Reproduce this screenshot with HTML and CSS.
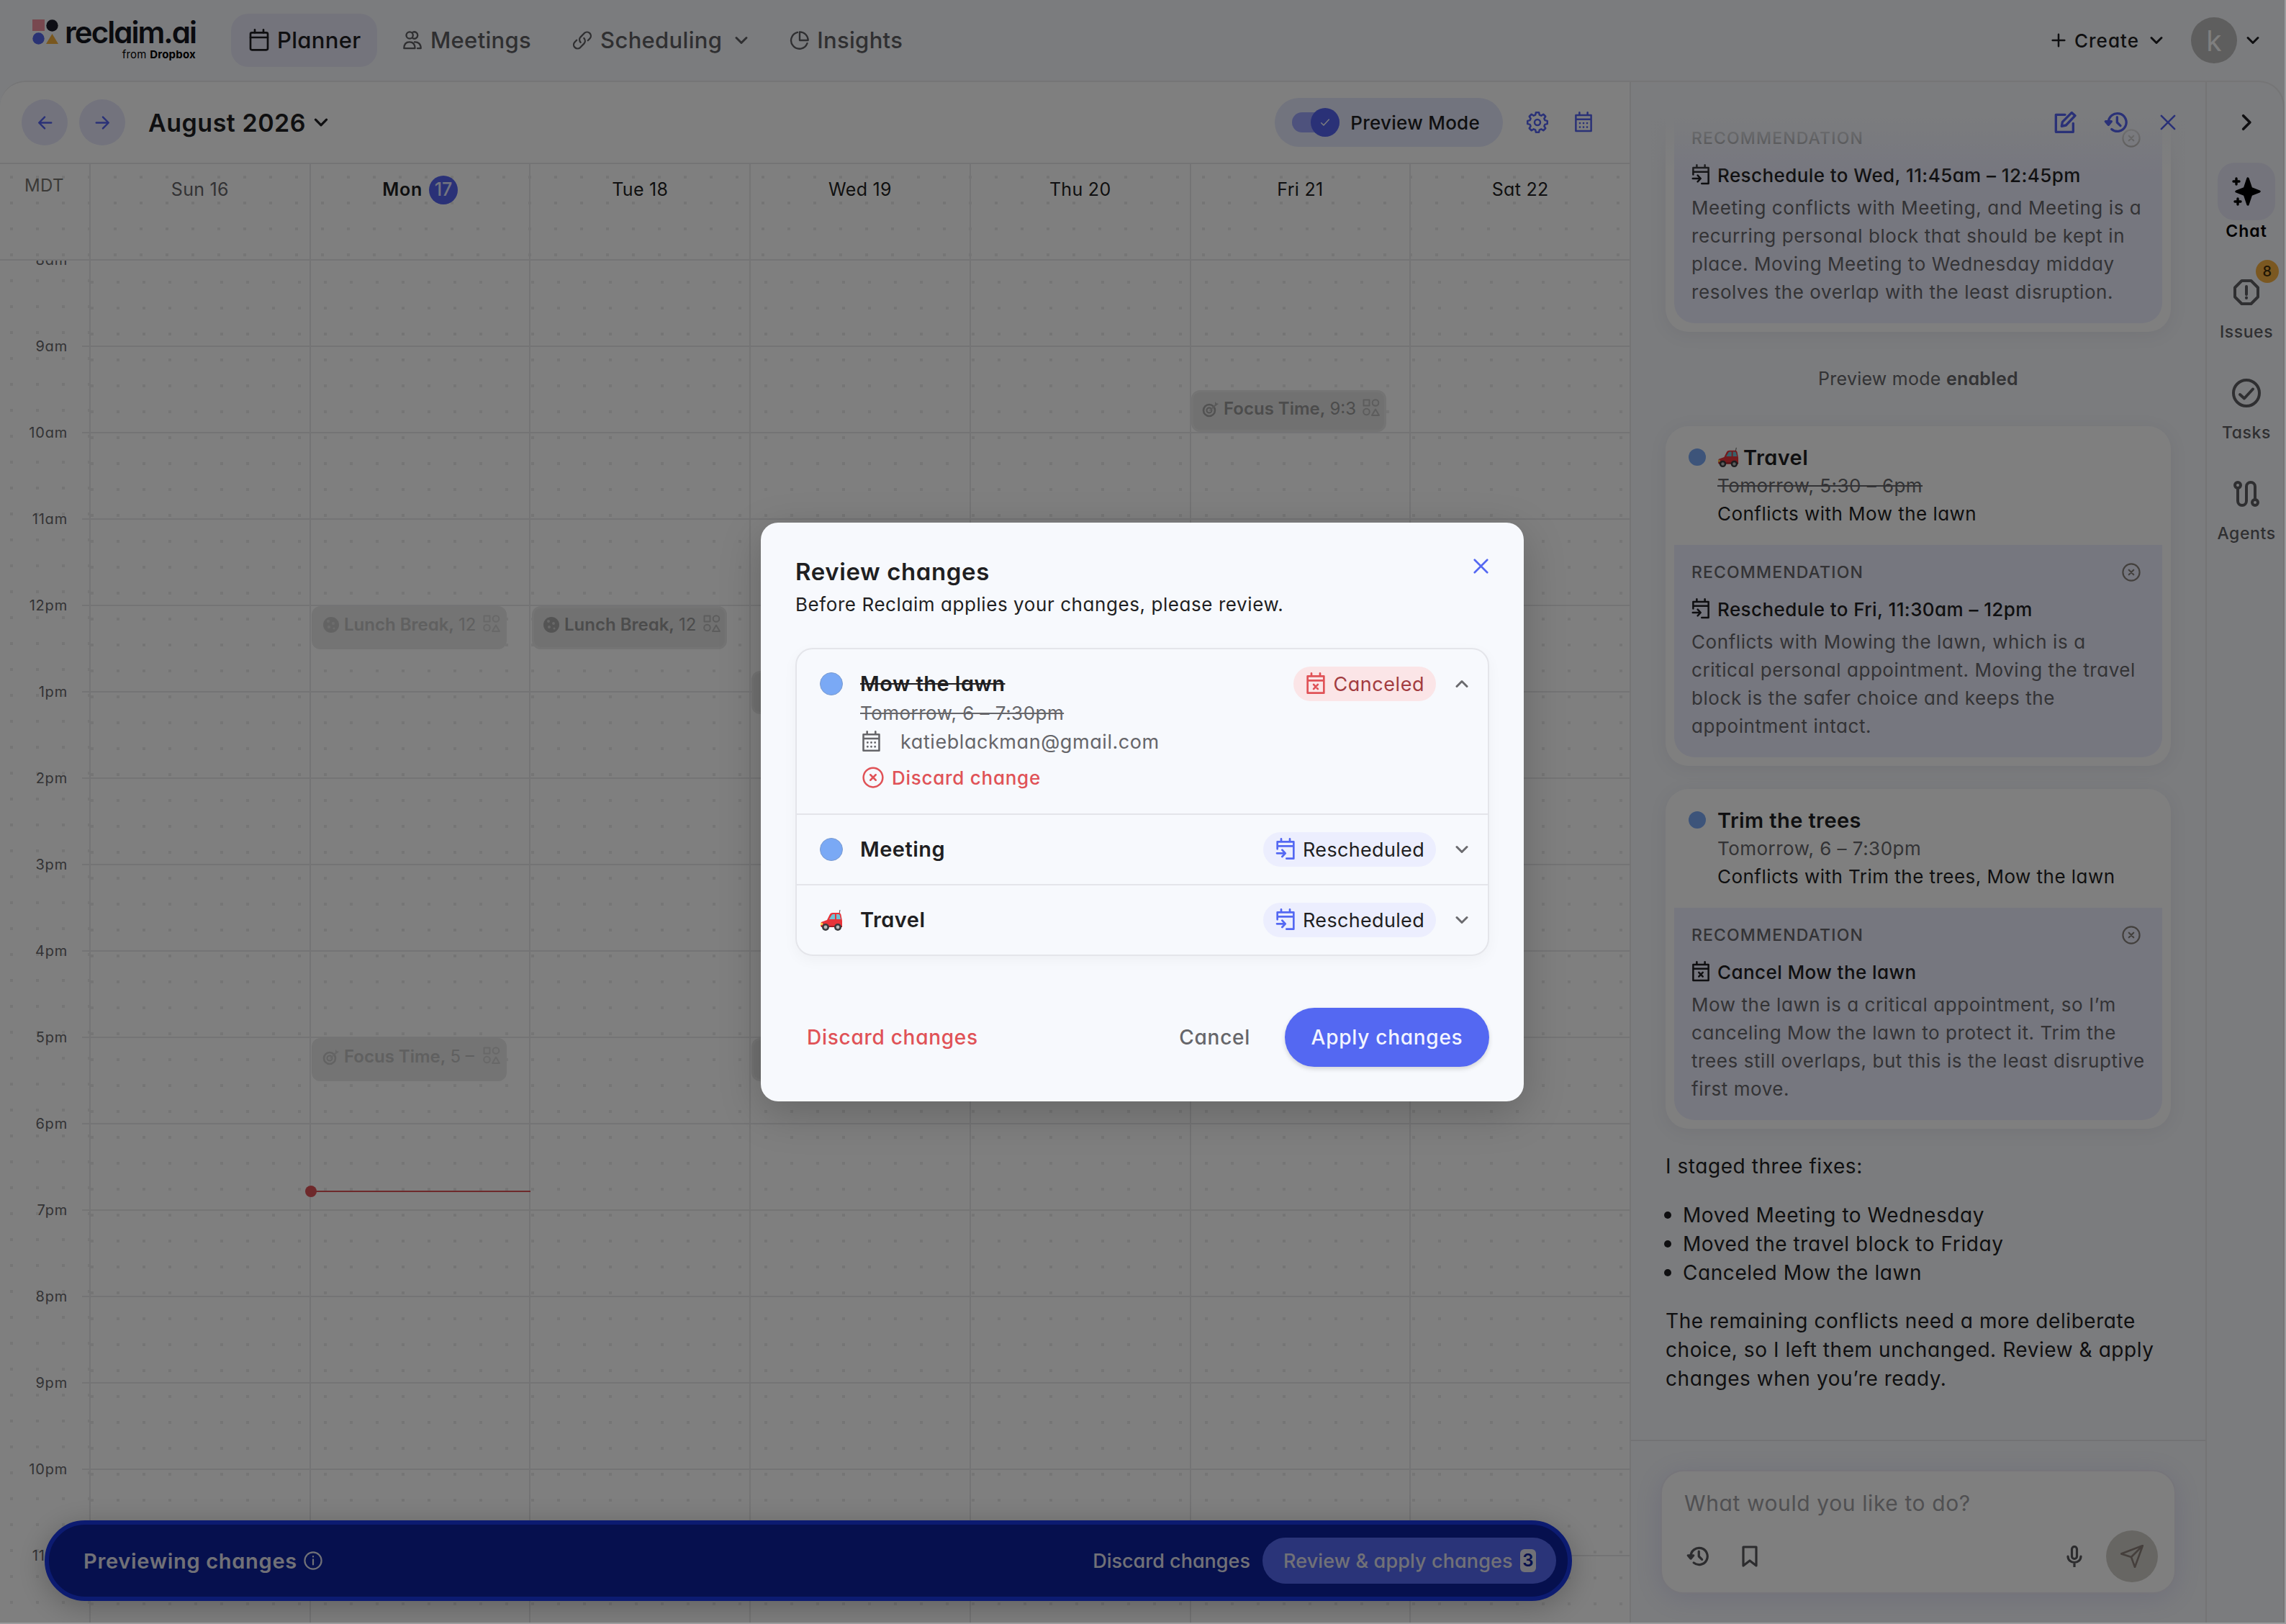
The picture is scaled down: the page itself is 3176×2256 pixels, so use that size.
FILE: index.html
```
<!DOCTYPE html>
<html lang="en">
<head>
    <meta charset="UTF-8">
    <title>Planner</title>
    <link rel="stylesheet" href="styles.css">
</head>
<body>
<svg class="sprite">
    <symbol id="i-calendar" viewBox="0 0 24 24"><rect x="3" y="4" width="18" height="18" rx="1.500"/><path d="M3 9h18M7.500 1v3M16.500 1v3"/></symbol>
    <symbol id="i-calendar-dots" viewBox="0 0 24 24"><path d="M3.500 4h17v17.500h-17zM3.500 8.500h17M7.500 1v3M16.500 1v3"/><path stroke-width="2.200" d="M8 12.800v.01M12 12.800v.01M16 12.800v.01M8 17.200v.01M12 17.200v.01M16 17.200v.01"/></symbol>
    <symbol id="i-calendar-x" viewBox="0 0 24 24"><path d="M3.500 4h17v17.500h-17zM3.500 8.500h17M7.500 1v3M16.500 1v3M9.800 12.700l4.400 4.600M14.200 12.700l-4.400 4.600"/></symbol>
    <symbol id="i-calendar-move" viewBox="0 0 24 24"><path d="M3.500 11.500V4h17v17.500H13M3.500 8.500h17M7.500 1v3M16.500 1v3M3 16h8.500M8.500 12.500l3.300 3.500-3.300 3.500"/></symbol>
    <symbol id="i-people" viewBox="0 0 24 24"><circle cx="8.700" cy="6" r="4"/><path d="M12.500 2.400a4 4 0 1 1 0 7.200M2 21.500c0-5 2.500-7.500 6.500-7.500s6.500 2.500 6.500 7.500zM14.500 14c4.500-.3 7.500 2.500 7.500 7.500h-4"/></symbol>
    <symbol id="i-link" viewBox="0 0 24 24"><path d="M10 14.500a4.800 4.800 0 0 1 0-6.500l4.500-4.600a4.600 4.600 0 0 1 6.500 6.500l-2.300 2.300M14 9.500a4.800 4.800 0 0 1 0 6.500l-4.500 4.600A4.600 4.600 0 0 1 3 14.100l2.300-2.300"/></symbol>
    <symbol id="i-pie" viewBox="0 0 24 24"><path d="M12 2v10h10A10 10 0 0 0 12 2z"/><path d="M9.500 2.500A9.900 9.900 0 1 0 21 15.500"/></symbol>
    <symbol id="i-down" viewBox="0 0 24 24"><path d="M5 8.500l7 7 7-7"/></symbol>
    <symbol id="i-up" viewBox="0 0 24 24"><path d="M5 15.500l7-7 7 7"/></symbol>
    <symbol id="i-right" viewBox="0 0 24 24"><path d="M8 3.500l8.500 8.500L8 20.500"/></symbol>
    <symbol id="i-plus" viewBox="0 0 24 24"><path d="M12 2v20M2 12h20"/></symbol>
    <symbol id="i-arrow-left" viewBox="0 0 24 24"><path d="M22 12H3M11.500 3L2.500 12l9 9"/></symbol>
    <symbol id="i-arrow-right" viewBox="0 0 24 24"><path d="M2 12h19M12.500 3l9 9-9 9"/></symbol>
    <symbol id="i-check" viewBox="0 0 24 24"><path d="M4 13l5 5L20 6"/></symbol>
    <symbol id="i-gear" viewBox="0 0 24 24"><circle cx="12" cy="12" r="3.200"/><path d="M10.300 2h3.400l.6 2.700 1.900.8 2.400-1.500 2.400 2.400-1.500 2.400.8 1.900 2.700.6v3.400l-2.700.6-.8 1.900 1.500 2.400-2.400 2.400-2.400-1.500-1.900.8-.6 2.700h-3.400l-.6-2.700-1.900-.8-2.400 1.500-2.400-2.400 1.500-2.400-.8-1.900-2.700-.6v-3.400l2.700-.6.8-1.900-1.500-2.400 2.400-2.400 2.400 1.500 1.900-.8z" transform="translate(0 -1)"/></symbol>
    <symbol id="i-edit" viewBox="0 0 24 24"><path d="M12 4H2.500v18h18V13M8.500 16l.8-4.500L19 1.800 22.500 5 13 15z"/></symbol>
    <symbol id="i-history" viewBox="0 0 24 24"><path d="M4 12a9.300 9.300 0 1 1 3.300 7.100M13 6.500V12l3.500 3.500"/><path class="fill" d="M1 11h6l-3 3.500z"/></symbol>
    <symbol id="i-close" viewBox="0 0 24 24"><path d="M2 2l20 20M22 2L2 22"/></symbol>
    <symbol id="i-circle-x" viewBox="0 0 24 24"><circle cx="12" cy="12" r="10.700"/><path d="M9 9l6 6M15 9l-6 6"/></symbol>
    <symbol id="i-info" viewBox="0 0 24 24"><circle cx="12" cy="12" r="10.700"/><path d="M12 10.500V17M12 6.500v.5"/></symbol>
    <symbol id="i-octagon" viewBox="0 0 36 36"><path d="M11.500 2h13L34 11.500v13L24.500 34h-13L2 24.500v-13zM18 10v11M18 25.500v.5"/></symbol>
    <symbol id="i-task" viewBox="0 0 40 40"><circle cx="20" cy="20" r="18"/><path d="M11 22l6 5.500L29 14.500"/></symbol>
    <symbol id="i-agents" viewBox="0 0 36 36"><circle cx="6" cy="6" r="4"/><circle cx="30" cy="30" r="4"/><path d="M6 10v18a6 6 0 0 0 12 0V8a6 6 0 0 1 12 0v18"/></symbol>
    <symbol id="i-sparkle" viewBox="0 0 40 40"><path class="fill" d="M22 2l4.500 13.500L38 20l-11.500 4.500L22 38l-4.500-13.500L6 20l11.500-4.500z"/><path d="M6 2v8M2 6h8M8 30v8M4 34h8"/></symbol>
    <symbol id="i-bookmark" viewBox="0 0 24 30"><path d="M3 2h18v26l-9-7-9 7z"/></symbol>
    <symbol id="i-mic" viewBox="0 0 24 30"><rect x="8.500" y="1.500" width="7" height="17" rx="3.500"/><path d="M3 15c0 5 4 8.500 9 8.500s9-3.500 9-8.500M12 24v5.500"/></symbol>
    <symbol id="i-send" viewBox="0 0 32 32"><path d="M31 1L1 12.500l14 4.500 5 14zM31 1L15 17"/></symbol>
    <symbol id="i-shapes" viewBox="0 0 24 24"><path d="M1.500 1.500h8v8h-8zM18 14.500l5 8.500H13z"/><circle cx="18" cy="5.500" r="4.300"/><circle cx="5.500" cy="18" r="4.300"/></symbol>
    <symbol id="i-cookie" viewBox="0 0 24 24"><circle cx="12" cy="12" r="11" fill="#a8a8a8"/><g fill="#d0d0d0"><circle cx="8" cy="7" r="2"/><circle cx="15" cy="10" r="2"/><circle cx="9" cy="15" r="2"/><circle cx="16" cy="17" r="1.500"/></g></symbol>
    <symbol id="i-target" viewBox="0 0 24 24"><g fill="none" stroke="#a5a5a5"><circle cx="10" cy="14" r="8" stroke-width="2.600"/><circle cx="10" cy="14" r="3.500" stroke-width="2"/></g><path fill="#b5b5b5" d="M10 14l8-8 0-4 2 2 3 1-4 3-8 7z"/></symbol>
    <symbol id="i-car" viewBox="0 0 32 32"><path d="M27 8l1-6" stroke="#555" fill="none"/><path fill="#e8343a" d="M2 19l8-3 4-8q1-2 4-2h8q3 0 3.500 3l1.500 8v9H2q-2-3 0-7z"/><path fill="#6fc3d6" d="M13 15l3.500-6q.8-1 2-1H21v7zM23 8h3q1.500 0 2 2l1 5h-6z"/><path fill="#ffd34d" d="M1 20h3v3H1z"/><path fill="#a81c24" d="M2 24h29v2H2z"/><g fill="#3a3a3e"><circle cx="8" cy="26" r="5"/><circle cx="25" cy="26" r="5"/></g><g fill="#bbb"><circle cx="8" cy="26" r="2.400"/><circle cx="25" cy="26" r="2.400"/></g></symbol>
</svg>

<div class="app">
    <header class="topbar">
        <div class="logo">
            <svg class="logo-mark" viewBox="0 0 36 36"><path fill="#f0909f" d="M0 0h17v16H0z"/><circle cx="27.500" cy="8.500" r="8.200" fill="#1c1c2a"/><circle cx="8.500" cy="26.500" r="8.200" fill="#5566e8"/><path fill="#f2ae3c" d="M27.500 20l8.500 14H19z"/></svg>
            <div class="logo-text">
                <span class="logo-name">reclaim.ai</span>
                <span class="logo-from">from <b>Dropbox</b></span>
            </div>
        </div>
        <nav class="nav">
            <a class="nav-item active"><svg class="icon cal"><use href="#i-calendar"/></svg>Planner</a>
            <a class="nav-item meetings"><svg class="icon"><use href="#i-people"/></svg>Meetings</a>
            <a class="nav-item scheduling"><svg class="icon"><use href="#i-link"/></svg>Scheduling<svg class="icon chevron"><use href="#i-down"/></svg></a>
            <a class="nav-item insights"><svg class="icon"><use href="#i-pie"/></svg>Insights</a>
        </nav>
        <div class="account">
            <svg class="icon plus"><use href="#i-plus"/></svg>
            <span class="create">Create</span>
            <svg class="icon chevron"><use href="#i-down"/></svg>
            <span class="avatar">k</span>
            <svg class="icon chevron"><use href="#i-down"/></svg>
        </div>
    </header>

    <div class="main">
        <section class="planner">
            <div class="toolbar">
                <button class="round"><svg class="icon"><use href="#i-arrow-left"/></svg></button>
                <button class="round"><svg class="icon"><use href="#i-arrow-right"/></svg></button>
                <h1 class="month">August 2026</h1>
                <svg class="icon month-chevron"><use href="#i-down"/></svg>
                <div class="preview-toggle">
                    <span class="track"><span class="knob"><svg class="icon"><use href="#i-check"/></svg></span></span>
                    <span>Preview Mode</span>
                </div>
                <svg class="icon tool"><use href="#i-gear"/></svg>
                <svg class="icon tool"><use href="#i-calendar-dots"/></svg>
            </div>
            <div class="days">
                <div class="zone">MDT</div>
                <div class="day past">Sun 16</div>
                <div class="day today">Mon<span class="today-num">17</span></div>
                <div class="day">Tue 18</div>
                <div class="day">Wed 19</div>
                <div class="day">Thu 20</div>
                <div class="day">Fri 21</div>
                <div class="day">Sat 22</div>
            </div>
            <div class="grid">
                <div class="hours">
                    <div>8am</div>
                    <div>9am</div>
                    <div>10am</div>
                    <div>11am</div>
                    <div>12pm</div>
                    <div>1pm</div>
                    <div>2pm</div>
                    <div>3pm</div>
                    <div>4pm</div>
                    <div>5pm</div>
                    <div>6pm</div>
                    <div>7pm</div>
                    <div>8pm</div>
                    <div>9pm</div>
                    <div>10pm</div>
                    <div>11pm</div>
                </div>
                <div class="columns">
                    <div class="col"></div><div class="col"></div><div class="col"></div><div class="col"></div><div class="col"></div><div class="col"></div><div class="col"></div>
                    <div class="event faded lunch-mon"><svg class="emoji"><use href="#i-cookie"/></svg><b>Lunch Break,</b>12<svg class="icon"><use href="#i-shapes"/></svg></div>
                    <div class="event lunch-tue"><svg class="emoji"><use href="#i-cookie"/></svg><b>Lunch Break,</b>12<svg class="icon"><use href="#i-shapes"/></svg></div>
                    <div class="event focus-fri"><svg class="emoji"><use href="#i-target"/></svg><b>Focus Time,</b>9:3<svg class="icon"><use href="#i-shapes"/></svg></div>
                    <div class="event faded focus-mon"><svg class="emoji"><use href="#i-target"/></svg><b>Focus Time,</b>5 –<svg class="icon"><use href="#i-shapes"/></svg></div>
                    <div class="event block-wed"></div>
                    <div class="event focus-wed"></div>
                    <div class="now"></div>
                </div>
            </div>
            <div class="preview-bar">
                <strong>Previewing changes</strong>
                <svg class="icon"><use href="#i-info"/></svg>
                <span class="discard">Discard changes</span>
                <button class="review">Review &amp; apply changes<span class="count">3</span></button>
            </div>
        </section>

        <aside class="chat">
            <div class="messages">
                <article class="card">
                    <div class="card-head">
                        <div class="card-title"><i class="dot"></i>Meeting</div>
                        <p class="muted">Tomorrow, 6 – 7:30pm</p>
                        <p>Conflicts with Meeting</p>
                    </div>
                    <div class="rec">
                        <div class="rec-label">RECOMMENDATION<svg class="icon"><use href="#i-circle-x"/></svg></div>
                        <div class="rec-action"><svg class="icon"><use href="#i-calendar-move"/></svg>Reschedule to Wed, 11:45am – 12:45pm</div>
                        <p>Meeting conflicts with Meeting, and Meeting is a<br>recurring personal block that should be kept in<br>place. Moving Meeting to Wednesday midday<br>resolves the overlap with the least disruption.</p>
                    </div>
                </article>
                <p class="notice">Preview mode <b>enabled</b></p>
                <article class="card">
                    <div class="card-head">
                        <div class="card-title"><i class="dot"></i><svg class="emoji"><use href="#i-car"/></svg>Travel</div>
                        <p class="muted struck">Tomorrow, 5:30 – 6pm</p>
                        <p>Conflicts with Mow the lawn</p>
                    </div>
                    <div class="rec">
                        <div class="rec-label">RECOMMENDATION<svg class="icon"><use href="#i-circle-x"/></svg></div>
                        <div class="rec-action"><svg class="icon"><use href="#i-calendar-move"/></svg>Reschedule to Fri, 11:30am – 12pm</div>
                        <p>Conflicts with Mowing the lawn, which is a<br>critical personal appointment. Moving the travel<br>block is the safer choice and keeps the<br>appointment intact.</p>
                    </div>
                </article>
                <article class="card">
                    <div class="card-head">
                        <div class="card-title"><i class="dot"></i>Trim the trees</div>
                        <p class="muted">Tomorrow, 6 – 7:30pm</p>
                        <p>Conflicts with Trim the trees, Mow the lawn</p>
                    </div>
                    <div class="rec">
                        <div class="rec-label">RECOMMENDATION<svg class="icon"><use href="#i-circle-x"/></svg></div>
                        <div class="rec-action"><svg class="icon"><use href="#i-calendar-x"/></svg>Cancel Mow the lawn</div>
                        <p>Mow the lawn is a critical appointment, so I’m<br>canceling Mow the lawn to protect it. Trim the<br>trees still overlaps, but this is the least disruptive<br>first move.</p>
                    </div>
                </article>
                <div class="reply">
                    <p>I staged three fixes:</p>
                    <ul>
                        <li>Moved Meeting to Wednesday</li>
                        <li>Moved the travel block to Friday</li>
                        <li>Canceled Mow the lawn</li>
                    </ul>
                    <p>The remaining conflicts need a more deliberate<br>choice, so I left them unchanged. Review &amp; apply<br>changes when you’re ready.</p>
                </div>
            </div>
            <div class="chat-tools">
                <svg class="icon"><use href="#i-edit"/></svg>
                <svg class="icon wide"><use href="#i-history"/></svg>
                <svg class="icon small"><use href="#i-close"/></svg>
            </div>
            <div class="composer">
                <div class="prompt">
                    <p class="placeholder">What would you like to do?</p>
                    <div class="prompt-tools">
                        <svg class="icon history"><use href="#i-history"/></svg>
                        <svg class="icon bookmark"><use href="#i-bookmark"/></svg>
                        <svg class="icon mic"><use href="#i-mic"/></svg>
                        <span class="send"><svg class="icon"><use href="#i-send"/></svg></span>
                    </div>
                </div>
            </div>
        </aside>

        <nav class="rail">
            <svg class="icon collapse"><use href="#i-right"/></svg>
            <a class="rail-item active"><span class="rail-icon"><svg class="icon sparkle"><use href="#i-sparkle"/></svg></span>Chat</a>
            <a class="rail-item"><span class="rail-icon"><svg class="icon"><use href="#i-octagon"/></svg><i class="badge">8</i></span>Issues</a>
            <a class="rail-item"><span class="rail-icon"><svg class="icon task"><use href="#i-task"/></svg></span>Tasks</a>
            <a class="rail-item"><span class="rail-icon"><svg class="icon"><use href="#i-agents"/></svg></span>Agents</a>
        </nav>
    </div>

    <div class="overlay">
        <div class="modal">
            <div class="modal-head">
                <h2>Review changes</h2>
                <svg class="icon"><use href="#i-close"/></svg>
            </div>
            <p class="modal-sub">Before Reclaim applies your changes, please review.</p>
            <div class="changes">
                <div class="change open">
                    <i class="dot"></i>
                    <div class="change-body">
                        <div class="change-title"><s>Mow the lawn</s></div>
                        <div class="change-line"><s>Tomorrow, 6 – 7:30pm</s></div>
                        <div class="change-line email"><svg class="icon"><use href="#i-calendar-dots"/></svg>katieblackman@gmail.com</div>
                        <div class="change-discard"><svg class="icon"><use href="#i-circle-x"/></svg>Discard change</div>
                    </div>
                    <span class="pill canceled"><svg class="icon"><use href="#i-calendar-x"/></svg>Canceled</span>
                    <svg class="icon chevron"><use href="#i-up"/></svg>
                </div>
                <div class="change">
                    <i class="dot"></i>
                    <div class="change-body"><div class="change-title">Meeting</div></div>
                    <span class="pill"><svg class="icon"><use href="#i-calendar-move"/></svg>Rescheduled</span>
                    <svg class="icon chevron"><use href="#i-down"/></svg>
                </div>
                <div class="change">
                    <svg class="emoji"><use href="#i-car"/></svg>
                    <div class="change-body"><div class="change-title">Travel</div></div>
                    <span class="pill"><svg class="icon"><use href="#i-calendar-move"/></svg>Rescheduled</span>
                    <svg class="icon chevron"><use href="#i-down"/></svg>
                </div>
            </div>
            <div class="modal-actions">
                <span class="danger">Discard changes</span>
                <span class="cancel">Cancel</span>
                <button class="apply">Apply changes</button>
            </div>
        </div>
    </div>
</div>
</body>
</html>
```
FILE: styles.css
```
* {
    box-sizing: border-box;
}
body {
    background: #9b9b9d;
    color: #1f1f22;
    font-family: Inter, "Open Sans", sans-serif;
    font-feature-settings: "cv11";
    font-size: 25px;
    line-height: 39px;
    margin: 0;
    white-space: nowrap;
}
h1, h2, p, ul {
    margin: 0;
    padding: 0;
}
button {
    border: none;
    font: inherit;
    letter-spacing: inherit;
    padding: 0;
}
.sprite {
    display: block;
    height: 0;
    width: 0;
}
.icon {
    fill: none;
    flex: none;
    height: 28px;
    overflow: visible;
    stroke: currentColor;
    stroke-linecap: round;
    stroke-linejoin: round;
    stroke-width: 2;
    width: 28px;
}
.fill {
    fill: currentColor;
}
.emoji {
    flex: none;
    height: 32px;
    width: 32px;
}
.chevron {
    height: 24px;
    stroke-width: 3;
    width: 24px;
}
.app {
    background: #f6f8fc;
    height: 2254px;
    overflow: hidden;
    position: relative;
    width: 3174px;
}

/* top bar */
.topbar {
    align-items: center;
    display: flex;
    height: 112px;
}
.logo {
    display: flex;
    gap: 9px;
    height: 64px;
    padding-left: 45px;
    width: 321px;
}
.logo-mark {
    height: 36px;
    margin-top: 3px;
    width: 36px;
}
.logo-text {
    display: flex;
    flex-direction: column;
    width: 182px;
}
.logo-name {
    color: #14161f;
    font-size: 42px;
    font-weight: 600;
    letter-spacing: -.047em;
    line-height: 42px;
}
.logo-from {
    align-self: flex-end;
    color: #000;
    font-size: 15px;
    letter-spacing: .015em;
    line-height: 20px;
}
.nav {
    display: flex;
}
.nav-item {
    align-items: center;
    color: #5f5f63;
    display: flex;
    font-size: 31px;
    font-weight: 500;
    gap: 11px;
    height: 74px;
    letter-spacing: .01em;
    padding-bottom: 1px;
}
.nav-item.active {
    background: #e8e8f9;
    border-radius: 24px;
    color: #1f1f22;
    gap: 9px;
    padding-left: 23px;
    width: 203px;
}
.nav-item .cal {
    height: 32px;
    width: 32px;
}
.nav-item.meetings {
    padding-left: 35px;
}
.nav-item.scheduling {
    padding-left: 57px;
}
.nav-item .chevron {
    margin-left: 4px;
}
.nav-item.insights {
    gap: 10px;
    padding-left: 55px;
}
.account {
    align-items: center;
    display: flex;
    flex: 1;
    font-size: 26px;
    font-weight: 500;
    justify-content: flex-end;
    padding-right: 32px;
}
.account .plus {
    height: 20px;
    margin-right: 12px;
    stroke-width: 3;
    width: 20px;
}
.account .create {
    letter-spacing: .04em;
    margin-right: 12px;
}
.avatar {
    align-items: center;
    background: #bcbcbc;
    border-radius: 50%;
    color: #fff;
    display: flex;
    font-size: 39px;
    font-weight: 400;
    height: 64px;
    justify-content: center;
    margin: 0 10px 0 36px;
    width: 64px;
}

/* main area */
.main {
    border: solid 2px #eaeaec;
    border-bottom: none;
    border-left: none;
    border-radius: 36px 36px 0 0;
    display: flex;
    height: 2142px;
    overflow: hidden;
}
.planner {
    background: #fff;
    border-right: solid 2px #e8e8ea;
    flex: none;
    position: relative;
    width: 2266px;
}
.toolbar {
    align-items: center;
    border-bottom: solid 2px #e8e8ea;
    display: flex;
    height: 114px;
    padding: 0 48px 0 30px;
}
.round {
    align-items: center;
    background: #e6e7fb;
    border-radius: 50%;
    color: #5463ef;
    display: flex;
    height: 64px;
    justify-content: center;
    margin-right: 16px;
    width: 64px;
}
.round .icon {
    height: 21px;
    stroke-width: 2.800;
    width: 21px;
}
.month {
    font-size: 34px;
    font-weight: 600;
    letter-spacing: .015em;
    margin-left: 16px;
}
.month-chevron {
    margin-left: 8px;
    stroke-width: 3;
    width: 26px;
}
.preview-toggle {
    align-items: center;
    background: #e4e8fc;
    border-radius: 34px;
    display: flex;
    font-size: 26px;
    font-weight: 500;
    gap: 15px;
    height: 68px;
    letter-spacing: .01em;
    margin-left: auto;
    padding: 0 32px 0 24px;
}
.track {
    background: #9ca5fb;
    border-radius: 14px;
    display: flex;
    height: 28px;
    width: 66px;
}
.knob {
    align-items: center;
    background: #5463ef;
    border-radius: 50%;
    color: #fff;
    display: flex;
    height: 40px;
    justify-content: center;
    margin: -6px 0 0 26px;
    width: 40px;
}
.knob .icon {
    height: 16px;
    width: 16px;
}
.tool {
    color: #5463ef;
    height: 30px;
    margin-left: 32px;
    width: 32px;
}
.days {
    background: conic-gradient(from 270deg at 4px 4px, #ebebeb 90deg, transparent 0) 14px 16px / 36px 36px;
    border-bottom: solid 2px #e8e8ea;
    display: grid;
    grid-template-columns: 124px repeat(7, 1fr);
    height: 134px;
    letter-spacing: .012em;
}
.zone {
    color: #777470;
    font-size: 24px;
    padding: 10px 0 0 34px;
}
.day {
    border-left: solid 2px #e8e8ea;
    display: flex;
    justify-content: center;
    padding-top: 16px;
}
.day.past {
    color: #66666a;
}
.day.today {
    font-weight: 600;
    letter-spacing: .03em;
}
.today-num {
    background: #5463ef;
    border-radius: 50%;
    color: #e6e8ff;
    font-weight: 500;
    height: 40px;
    letter-spacing: 0;
    margin-left: 9px;
    text-align: center;
    width: 40px;
}
.grid {
    background: repeating-linear-gradient(transparent 0 118px, #e8e8ea 118px 120px) 114px 0 no-repeat;
    display: flex;
    height: 1892px;
    overflow: hidden;
}
.hours {
    background: conic-gradient(from 270deg at 4px 4px, #ebebeb 90deg, transparent 0) 14px 15px / 36px 36px;
    color: #66666a;
    font-size: 20px;
    letter-spacing: .04em;
    line-height: 120px;
    margin-top: -61px;
    padding-right: 30px;
    text-align: right;
    width: 124px;
}
.hours div {
    height: 120px;
}
.columns {
    background: conic-gradient(from 270deg at 4px 4px, #ebebeb 90deg, transparent 0) 2px 28px / 36px 36px;
    display: grid;
    flex: 1;
    grid-template-columns: repeat(7, 1fr);
    position: relative;
}
.col {
    border-left: solid 2px #e8e8ea;
}

/* events are placed on the time grid by hour */
.event {
    background: #e3e3e3;
    border: solid 3px #e9e9e9;
    border-radius: 12px;
    color: #999;
    display: flex;
    font-size: 24px;
    height: 60px;
    line-height: 46px;
    padding: 0 8px 0 12px;
    position: absolute;
    width: 271px;
}
.event b {
    font-weight: 600;
    margin: 0 6px;
}
.event .emoji {
    height: 24px;
    margin-top: 11px;
    width: 24px;
}
.event .icon {
    height: 24px;
    margin: 9px -2px 0 auto;
    opacity: .55;
    width: 24px;
}
.event.faded {
    background: #e8e8e8;
    color: #c0c0c0;
}
.faded .emoji {
    opacity: .5;
}
.lunch-mon { left: 309px; top: 480px; }
.lunch-tue { left: 615px; top: 480px; }
.focus-fri { height: 58px; left: 1531px; top: 180px; }
.focus-mon { left: 309px; top: 1080px; }
.block-wed { left: 920px; top: 570px; }
.focus-wed { left: 920px; top: 1080px; }
.now {
    background: #dc5257;
    height: 2px;
    left: 308px;
    position: absolute;
    top: 1292px;
    width: 305px;
}
.now::before {
    background: #dc5257;
    border-radius: 50%;
    content: "";
    height: 16px;
    left: -8px;
    position: absolute;
    top: -7px;
    width: 16px;
}
.preview-bar {
    align-items: center;
    background: #0c209c;
    border: solid 6px #1836e2;
    border-radius: 56px;
    bottom: 30px;
    box-shadow: 0 8px 40px rgba(0, 0, 0, .25);
    color: #e2e2ee;
    display: flex;
    font-size: 27px;
    font-weight: 500;
    height: 112px;
    left: 62px;
    padding: 0 16px 0 48px;
    position: absolute;
    width: 2122px;
}
.preview-bar strong {
    font-size: 29px;
    font-weight: 600;
    letter-spacing: .024em;
}
.preview-bar .icon {
    height: 26px;
    margin-left: 9px;
    width: 26px;
}
.preview-bar .discard {
    margin-left: auto;
}
.review {
    align-items: center;
    background: #5468f2;
    border-radius: 32px;
    color: #e2e2ee;
    display: flex;
    height: 64px;
    letter-spacing: .004em;
    margin-left: 17px;
    padding: 0 28px 0 29px;
    width: 408px;
}
.count {
    background: #e2e2ee;
    border-radius: 6px;
    color: #0c209c;
    font-size: 24px;
    font-weight: 600;
    height: 32px;
    line-height: 32px;
    margin-left: auto;
    text-align: center;
    width: 22px;
}

/* chat */
.chat {
    border-right: solid 2px #e8e8ea;
    display: flex;
    flex: none;
    flex-direction: column;
    font-size: 26px;
    letter-spacing: .018em;
    position: relative;
    width: 800px;
}
.messages {
    display: flex;
    flex-direction: column;
    height: 1886px;
    justify-content: flex-end;
    overflow: hidden;
    padding: 0 48px 65px;
}
.messages::before {
    background: linear-gradient(#f6f8fc 50px, transparent);
    content: "";
    height: 130px;
    left: 0;
    position: absolute;
    top: 0;
    width: 100%;
}
.card {
    background: #fff;
    border-radius: 32px;
    box-shadow: 0 4px 24px rgba(60, 50, 90, .08);
    flex: none;
    height: 472px;
    margin-bottom: 32px;
    padding: 12px;
    width: 702px;
}
.card-head {
    height: 153px;
    padding: 11px 0 0 60px;
}
.card-title {
    align-items: center;
    display: flex;
    font-size: 29px;
    font-weight: 600;
    height: 40px;
    letter-spacing: .014em;
}
.card-title .dot {
    margin: 0 16px 0 -40px;
}
.card-title .emoji {
    margin-right: 6px;
    width: 30px;
}
.dot {
    background: #7aa9f5;
    border-radius: 50%;
    flex: none;
    height: 24px;
    width: 24px;
}
.muted {
    color: #66666a;
}
.struck {
    text-decoration: line-through;
}
.rec {
    background: #edeeff;
    border-radius: 0 0 28px 28px;
    height: 295px;
    padding: 18px 30px 0 24px;
}
.rec-label {
    align-items: center;
    color: #66666a;
    display: flex;
    font-size: 23px;
    font-weight: 500;
    height: 40px;
    justify-content: space-between;
    letter-spacing: .05em;
}
.rec-label .icon {
    color: #87807a;
    height: 26px;
    width: 26px;
}
.rec-action {
    align-items: center;
    display: flex;
    font-weight: 500;
    gap: 8px;
    height: 62px;
    letter-spacing: .016em;
    margin: 0 0 -5px -2px;
}
.rec-action .icon {
    height: 30px;
    width: 30px;
}
.rec p {
    color: #66666a;
    letter-spacing: .022em;
}
.notice {
    color: #66666a;
    font-size: 25px;
    letter-spacing: .01em;
    margin: 14px 0 46px;
    text-align: center;
}
.notice b {
    font-weight: 600;
}
.reply {
    font-size: 28px;
    letter-spacing: .02em;
    line-height: 40px;
}
.reply ul {
    list-style: none;
    margin: 28px 0 27px;
}
.reply li {
    align-items: center;
    display: flex;
    padding-left: 24px;
}
.reply li::before {
    background: currentColor;
    border-radius: 50%;
    content: "";
    height: 10px;
    margin: 0 16px 0 -26px;
    width: 10px;
}
.chat-tools {
    align-items: center;
    color: #5463ef;
    display: flex;
    position: absolute;
    right: 41px;
    top: 40px;
}
.chat-tools .icon {
    height: 32px;
    stroke-width: 2.500;
    width: 32px;
}
.chat-tools .wide {
    margin: 0 43px 0 37px;
    width: 36px;
}
.chat-tools .small {
    height: 22px;
    stroke-width: 2.800;
    width: 22px;
}
.composer {
    border-top: solid 2px #e6e6ea;
    flex: 1;
    padding: 40px 41px 0;
}
.prompt {
    background: #fff;
    border: solid 2px #ecebf4;
    border-radius: 32px;
    box-shadow: 0 6px 36px rgba(90, 80, 200, .14);
    height: 172px;
    padding: 24px 23px 0 31px;
    width: 716px;
}
.placeholder {
    color: #a0a0a4;
    font-size: 30px;
    letter-spacing: .02em;
    line-height: 40px;
}
.prompt-tools {
    align-items: center;
    color: #58585c;
    display: flex;
    margin-top: 18px;
}
.prompt-tools .icon {
    height: 30px;
    stroke-width: 3.200;
    width: 24px;
}
.prompt-tools .history {
    margin-left: 2px;
    stroke-width: 2.600;
    width: 34px;
}
.prompt-tools .bookmark {
    margin-left: 43px;
}
.prompt-tools .mic {
    margin: 0 32px 0 auto;
}
.send {
    align-items: center;
    background: #cfcdc6;
    border-radius: 50%;
    color: #8b7f79;
    display: flex;
    height: 72px;
    justify-content: center;
    width: 72px;
}
.prompt-tools .send .icon {
    height: 32px;
    stroke-width: 2.600;
    width: 32px;
}

/* right rail */
.rail {
    align-items: center;
    color: #5f5f63;
    display: flex;
    flex: none;
    flex-direction: column;
    font-size: 23px;
    font-weight: 500;
    letter-spacing: .025em;
    width: 110px;
}
.collapse {
    color: #1f1f22;
    height: 26px;
    margin: 43px 0;
    stroke-width: 3.400;
    width: 26px;
}
.rail-item {
    align-items: center;
    display: flex;
    flex-direction: column;
    height: 140px;
}
.rail-icon {
    align-items: center;
    border-radius: 24px;
    display: flex;
    height: 80px;
    justify-content: center;
    margin-bottom: -4px;
    position: relative;
    width: 80px;
}
.rail-icon .icon {
    height: 36px;
    stroke-width: 4;
    width: 36px;
}
.rail-icon .task,
.rail-icon .sparkle {
    height: 40px;
    width: 40px;
}
.rail-icon .sparkle {
    stroke-width: 3.400;
}
.rail-item.active {
    color: #000;
    font-weight: 600;
    letter-spacing: .045em;
}
.active .rail-icon {
    background: #e8e8f9;
}
.badge {
    background: #f6b042;
    border-radius: 50%;
    color: #3d2a08;
    font-size: 20px;
    font-style: normal;
    height: 32px;
    line-height: 32px;
    position: absolute;
    right: -5px;
    text-align: center;
    top: -5px;
    width: 32px;
}

/* review dialog */
.overlay {
    background: rgba(0, 0, 0, .5);
    height: 100%;
    left: 0;
    padding: 726px 0 0 1057px;
    position: absolute;
    top: 0;
    width: 100%;
}
.modal {
    background: #f7f9fd;
    border-radius: 24px;
    box-shadow: 0 16px 60px rgba(0, 0, 0, .2);
    height: 804px;
    padding: 44px 48px 0;
    width: 1060px;
}
.modal-head {
    display: flex;
    justify-content: space-between;
}
.modal-head h2 {
    font-size: 33px;
    font-weight: 600;
    letter-spacing: .018em;
    line-height: 48px;
}
.modal-head .icon {
    color: #5468f2;
    height: 21px;
    margin: 6px 1px 0 0;
    stroke-width: 3;
    width: 21px;
}
.modal-sub {
    font-size: 26px;
    letter-spacing: .022em;
    line-height: 44px;
}
.changes {
    border: solid 2px #e4e5ea;
    border-radius: 24px;
    box-shadow: 0 6px 20px rgba(0, 0, 0, .04);
    margin-top: 38px;
    width: 964px;
}
.change {
    align-items: center;
    display: flex;
    height: 98px;
    padding: 0 24px 0 32px;
}
.change + .change {
    border-top: solid 2px #e4e5ea;
}
.change.open {
    align-items: flex-start;
    height: 228px;
    padding-top: 24px;
}
.change > .dot,
.change > .emoji {
    height: 32px;
    width: 32px;
}
.change > .dot {
    border: solid 1px #7b9cd0;
}
.open > .dot {
    margin-top: 8px;
}
.change-body {
    flex: 1;
    margin-left: 24px;
}
.change-title {
    font-size: 29px;
    font-weight: 600;
    letter-spacing: .016em;
    line-height: 48px;
}
.open .change-title {
    margin-bottom: -4px;
}
.change-line {
    align-items: center;
    color: #66666a;
    display: flex;
    font-size: 26px;
    height: 40px;
    letter-spacing: .018em;
}
.change-line.email {
    font-size: 27px;
    letter-spacing: .021em;
}
.change-line .icon {
    height: 31px;
    margin: 0 25px 0 0;
    width: 31px;
}
.change-discard {
    align-items: center;
    color: #e05257;
    display: flex;
    font-size: 26px;
    font-weight: 500;
    gap: 11px;
    height: 60px;
    letter-spacing: .028em;
    padding-left: 3px;
}
.change-discard .icon {
    height: 30px;
    width: 30px;
}
.pill {
    align-items: center;
    background: #eceefe;
    border-radius: 24px;
    display: flex;
    font-size: 27px;
    gap: 8px;
    height: 48px;
    letter-spacing: .012em;
    padding: 0 16px 0 15px;
}
.pill .icon {
    color: #5468f2;
    height: 32px;
    width: 32px;
}
.pill.canceled {
    background: #fbe5e7;
    color: #a23c40;
    letter-spacing: .02em;
}
.pill.canceled .icon {
    color: #e05257;
}
.change > .chevron {
    color: #6b6b6f;
    margin-left: 24px;
}
.open > .chevron {
    margin-top: 12px;
}
.modal-actions {
    align-items: center;
    display: flex;
    font-size: 28px;
    font-weight: 500;
    letter-spacing: .026em;
    margin-top: 72px;
}
.danger {
    color: #e05257;
    padding-left: 16px;
}
.cancel {
    color: #66666a;
    margin: 0 48px 0 auto;
}
.apply {
    background: #5468f2;
    border-radius: 41px;
    box-shadow: 0 3px 6px rgba(0, 0, 0, .15);
    color: #f2f4ff;
    height: 82px;
    width: 284px;
}
```
